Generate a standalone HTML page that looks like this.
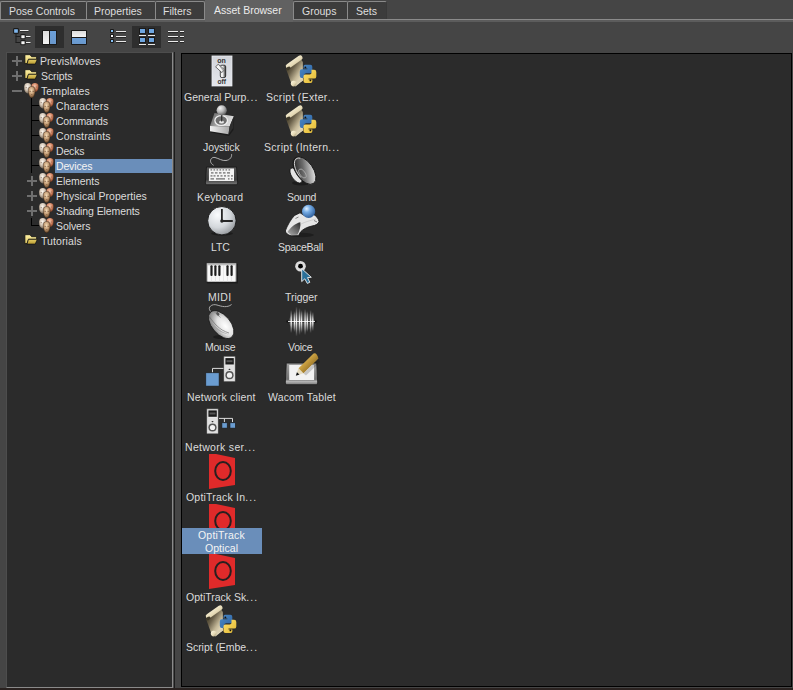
<!DOCTYPE html>
<html><head><meta charset="utf-8">
<style>
*{margin:0;padding:0;box-sizing:border-box}
html,body{width:793px;height:690px;overflow:hidden;background:#454545}
body{position:relative;font-family:"Liberation Sans",sans-serif;font-size:10.5px;color:#dcdcdc}
.a{position:absolute}
.t{position:absolute;white-space:nowrap;line-height:15px;height:15px}
/* tabs */
.tab{position:absolute;top:1px;height:19px;background:#3c3c3c;border-top:1px solid #8a8a8a;border-left:1px solid #8a8a8a;border-right:1px solid #393939;border-top-left-radius:2px;border-top-right-radius:2px}
.tab span{position:absolute;top:2px;line-height:15px;white-space:nowrap;color:#dedede}
.tabline{position:absolute;left:0;width:793px;top:19px;height:1px;background:#8a8a8a}
.tabline2{position:absolute;left:0;width:793px;top:20px;height:2px;background:#5c5c5c}
.active{position:absolute;left:205px;top:0;width:88px;height:22px;background:#616161}
.active span{position:absolute;left:9px;top:3px;line-height:15px;color:#ececec;white-space:nowrap}
.btnsel{position:absolute;top:26px;height:22px;width:29px;background:#2e2e2e}
/* panels */
#tree{position:absolute;left:6px;top:52px;width:167px;height:636px;background:#2b2b2b;border-left:1px solid #4d4d4d;border-top:1px solid #4d4d4d;border-right:1px solid #8a8a8a;border-bottom:1px solid #8a8a8a}
#treeR{position:absolute;left:173px;top:52px;width:2px;height:636px;background:linear-gradient(to right,#4a4a4a 50%,#1c1c1c 50%)}
#content{position:absolute;left:181px;top:53px;width:611px;height:634px;background:#2b2b2b;border:1px solid #000}
#bot{position:absolute;left:0;top:688px;width:793px;height:2px;background:#2a2220}
.sel{position:absolute;background:#6a8eba}
.dots{letter-spacing:1.1px}
.lbl2{position:absolute;line-height:15px;height:15px;white-space:nowrap;color:#dcdcdc}
.lbl{position:absolute;width:80px;text-align:center;line-height:15px;height:15px;white-space:nowrap;color:#dcdcdc}
</style></head><body>

<svg width="0" height="0" style="position:absolute">
<defs>
<radialGradient id="gPale" cx="45%" cy="35%" r="65%"><stop offset="0" stop-color="#fcf6ee"/><stop offset="0.55" stop-color="#d4c6b6"/><stop offset="1" stop-color="#7a6a58"/></radialGradient>
<radialGradient id="gPink" cx="45%" cy="35%" r="65%"><stop offset="0" stop-color="#f4ccb2"/><stop offset="0.55" stop-color="#d48664"/><stop offset="1" stop-color="#7e3c20"/></radialGradient>
<radialGradient id="gTan" cx="45%" cy="35%" r="65%"><stop offset="0" stop-color="#f4dcba"/><stop offset="0.55" stop-color="#c09870"/><stop offset="1" stop-color="#5e3e22"/></radialGradient>
<linearGradient id="gFoldB" x1="0" y1="0" x2="0" y2="1"><stop offset="0" stop-color="#fff2a8"/><stop offset="1" stop-color="#e0c860"/></linearGradient>
<linearGradient id="gFoldF" x1="0" y1="0" x2="0" y2="1"><stop offset="0" stop-color="#e6cf68"/><stop offset="1" stop-color="#b89a30"/></linearGradient>



</defs>
</svg>
<!-- Tabs -->
<div class="tab" style="left:0;width:87px"><span style="left:8px">Pose Controls</span></div>
<div class="tab" style="left:86px;width:70px"><span style="left:7px">Properties</span></div>
<div class="tab" style="left:155px;width:50px;border-right-color:#8a8a8a"><span style="left:7px">Filters</span></div>
<div class="tab" style="left:293px;width:55px"><span style="left:8px">Groups</span></div>
<div class="tab" style="left:347px;width:40px"><span style="left:8px">Sets</span></div>
<div class="tabline"></div>
<div class="tabline2"></div>
<div class="active"><span>Asset Browser</span></div>

<!-- Toolbar -->
<div class="btnsel" style="left:35px"></div>
<div class="btnsel" style="left:132px"></div>

<!-- Tree panel -->
<div id="tree"></div>
<div id="treeR"></div>

<!-- Content panel -->
<div id="content"></div>

<div id="bot"></div>
<svg class="a" style="left:0;top:22px" width="200" height="30" viewBox="0 22 200 30">
<defs>
<linearGradient id="gW" x1="0" y1="0" x2="0" y2="1"><stop offset="0" stop-color="#dcdcdc"/><stop offset="1" stop-color="#f4f4f4"/></linearGradient>
<linearGradient id="gB" x1="0" y1="0" x2="0" y2="1"><stop offset="0" stop-color="#6b9fd8"/><stop offset="1" stop-color="#6a98cc"/></linearGradient>
</defs>
<!-- tree icon -->
<rect x="13.6" y="28.6" width="4.8" height="4.8" rx="0.8" fill="#7fb6ec" stroke="#1c1a18" stroke-width="1.1"/>
<rect x="20" y="30" width="8.5" height="2" fill="#1c1c1c" opacity="0.5"/>
<rect x="20" y="30" width="8.5" height="1" fill="#ececec"/>
<rect x="15.5" y="33" width="1" height="9.5" fill="#1e1e1e"/>
<rect x="15.5" y="36" width="5" height="1" fill="#1e1e1e"/>
<rect x="15.5" y="42" width="5" height="1" fill="#1e1e1e"/>
<rect x="20.8" y="34.6" width="4.4" height="4.2" rx="0.8" fill="#f4f4f4" stroke="#1c1c1c" stroke-width="1.1"/>
<rect x="20.8" y="40.6" width="4.4" height="4.2" rx="0.8" fill="#f4f4f4" stroke="#1c1c1c" stroke-width="1.1"/>
<rect x="26" y="36" width="4.5" height="2" fill="#1c1c1c" opacity="0.5"/>
<rect x="26" y="36" width="4.5" height="1" fill="#ececec"/>
<rect x="26" y="42" width="4.5" height="2" fill="#1c1c1c" opacity="0.5"/>
<rect x="26" y="42" width="4.5" height="1" fill="#ececec"/>
<!-- vertical split (selected) -->
<rect x="42" y="30" width="15" height="15" rx="1" fill="#1a1a1a"/>
<rect x="43" y="31" width="6" height="13" fill="url(#gW)"/>
<rect x="50" y="31" width="6" height="13" fill="url(#gB)"/>
<!-- horizontal split -->
<rect x="71" y="30" width="16" height="15" rx="1" fill="#1a1a1a"/>
<rect x="72" y="31" width="14" height="6" fill="url(#gW)"/>
<rect x="72" y="38" width="14" height="6" fill="url(#gB)"/>
<!-- list icon -->
<rect x="110" y="29" width="4" height="4" rx="1" fill="#1a1a1a"/><rect x="111" y="30" width="2" height="2" fill="#86c0f4"/>
<rect x="110" y="34" width="4" height="4" rx="1" fill="#1a1a1a"/><rect x="111" y="35" width="2" height="2" fill="#f6f6f6"/>
<rect x="110" y="39" width="4" height="4" rx="1" fill="#1a1a1a"/><rect x="111" y="40" width="2" height="2" fill="#86c0f4"/>
<rect x="116" y="31" width="10" height="2" fill="#1a1a1a" opacity="0.7"/><rect x="116" y="31" width="10" height="1" fill="#e8e8e8"/>
<rect x="116" y="36" width="10" height="2" fill="#1a1a1a" opacity="0.7"/><rect x="116" y="36" width="10" height="1" fill="#e8e8e8"/>
<rect x="116" y="41" width="10" height="2" fill="#1a1a1a" opacity="0.7"/><rect x="116" y="41" width="10" height="1" fill="#e8e8e8"/>
<!-- grid icon (selected) -->
<rect x="139" y="28" width="7" height="6" fill="#1a1a1a"/><rect x="140" y="29" width="5" height="4" fill="#6fa6e0"/>
<rect x="148" y="28" width="7" height="6" fill="#1a1a1a"/><rect x="149" y="29" width="5" height="4" fill="#6fa6e0"/>
<rect x="139" y="37" width="7" height="6" fill="#1a1a1a"/><rect x="140" y="38" width="5" height="4" fill="#6fa6e0"/>
<rect x="148" y="37" width="7" height="6" fill="#1a1a1a"/><rect x="149" y="38" width="5" height="4" fill="#6fa6e0"/>
<rect x="139" y="35" width="7" height="1" fill="#e8e8e8"/><rect x="148" y="35" width="7" height="1" fill="#e8e8e8"/>
<rect x="139" y="44" width="7" height="1" fill="#e8e8e8"/><rect x="148" y="44" width="7" height="1" fill="#e8e8e8"/>
<!-- detail icon -->
<rect x="168" y="31" width="10" height="2" fill="#1a1a1a" opacity="0.7"/><rect x="168" y="31" width="10" height="1" fill="#ececec"/>
<rect x="180" y="31" width="4" height="2" fill="#1a1a1a" opacity="0.7"/><rect x="180" y="31" width="4" height="1" fill="#ececec"/>
<rect x="168" y="36" width="10" height="2" fill="#1a1a1a" opacity="0.7"/><rect x="168" y="36" width="10" height="1" fill="#ececec"/>
<rect x="180" y="36" width="4" height="2" fill="#1a1a1a" opacity="0.7"/><rect x="180" y="36" width="4" height="1" fill="#ececec"/>
<rect x="168" y="41" width="10" height="2" fill="#1a1a1a" opacity="0.7"/><rect x="168" y="41" width="10" height="1" fill="#ececec"/>
<rect x="180" y="41" width="4" height="2" fill="#1a1a1a" opacity="0.7"/><rect x="180" y="41" width="4" height="1" fill="#ececec"/>
</svg>
<div class="sel" style="left:55px;top:159px;width:117px;height:14px"></div>
<svg class="a" style="left:0;top:0" width="180" height="260" viewBox="0 0 180 260">
<rect x="31" y="98" width="1" height="75" fill="#000"/>
<g transform="translate(24,54)">
 <path d="M0.9,1.6 Q0.9,0.7 1.8,0.7 L6,0.7 L7.6,2.7 L12.6,2.7 L12.6,5.3 L4.6,5.3 L3,9.6 L0.9,9.6 Z" fill="url(#gFoldB)" stroke="#141414" stroke-width="0.8"/>
 <path d="M4.4,5.3 L13.4,5.3 L11.2,10.1 L3,10.1 Z" fill="url(#gFoldF)" stroke="#141414" stroke-width="0.8"/>
</g>
<g transform="translate(12,56)"><rect x="0" y="4" width="10" height="2" fill="#6f6f6f"/><rect x="4" y="0" width="2" height="10" fill="#6f6f6f"/></g>
<g transform="translate(24,69)">
 <path d="M0.9,1.6 Q0.9,0.7 1.8,0.7 L6,0.7 L7.6,2.7 L12.6,2.7 L12.6,5.3 L4.6,5.3 L3,9.6 L0.9,9.6 Z" fill="url(#gFoldB)" stroke="#141414" stroke-width="0.8"/>
 <path d="M4.4,5.3 L13.4,5.3 L11.2,10.1 L3,10.1 Z" fill="url(#gFoldF)" stroke="#141414" stroke-width="0.8"/>
</g>
<g transform="translate(12,71)"><rect x="0" y="4" width="10" height="2" fill="#6f6f6f"/><rect x="4" y="0" width="2" height="10" fill="#6f6f6f"/></g>
<g transform="translate(23,83)">
 <path d="M1.2,3.5 C1.2,1 2.8,0 4.8,0 C6.8,0 8.4,1 8.4,3.5 L8.2,6.5 C7.8,8.8 6.4,10.4 4.8,10.4 C3.2,10.4 1.6,8.8 1.3,6.5 Z" fill="url(#gPale)"/>
 <path d="M8.4,3 C8.4,0.8 10,0 12,0 C14,0 15.5,0.8 15.5,3 L15.3,5.5 C15,7.6 13.6,9 12,9 C10.4,9 9,7.6 8.6,5.5 Z" fill="url(#gPink)"/>
 <g fill="#5a4030" opacity="0.5"><rect x="2.6" y="4.2" width="1.4" height="0.9"/><rect x="5.6" y="4.2" width="1.4" height="0.9"/><rect x="10" y="3.6" width="1.3" height="0.9"/><rect x="12.8" y="3.6" width="1.3" height="0.9"/></g>
 <path d="M5.2,7 C5.2,4.6 6.8,3.5 8.7,3.5 C10.6,3.5 12.2,4.6 12.2,7 L12,10 C11.6,12.8 10.3,14.9 8.7,14.9 C7.1,14.9 5.8,12.8 5.4,10 Z" fill="url(#gTan)" stroke="#2a2018" stroke-width="0.4"/>
 <g fill="#4a3020" opacity="0.55"><rect x="6.5" y="7.9" width="1.5" height="0.9"/><rect x="9.5" y="7.9" width="1.5" height="0.9"/><rect x="8" y="11.3" width="1.4" height="0.7"/></g>
</g>
<rect x="12" y="90" width="10" height="2" fill="#6f6f6f"/>
<g transform="translate(38,98)">
 <path d="M1.2,3.5 C1.2,1 2.8,0 4.8,0 C6.8,0 8.4,1 8.4,3.5 L8.2,6.5 C7.8,8.8 6.4,10.4 4.8,10.4 C3.2,10.4 1.6,8.8 1.3,6.5 Z" fill="url(#gPale)"/>
 <path d="M8.4,3 C8.4,0.8 10,0 12,0 C14,0 15.5,0.8 15.5,3 L15.3,5.5 C15,7.6 13.6,9 12,9 C10.4,9 9,7.6 8.6,5.5 Z" fill="url(#gPink)"/>
 <g fill="#5a4030" opacity="0.5"><rect x="2.6" y="4.2" width="1.4" height="0.9"/><rect x="5.6" y="4.2" width="1.4" height="0.9"/><rect x="10" y="3.6" width="1.3" height="0.9"/><rect x="12.8" y="3.6" width="1.3" height="0.9"/></g>
 <path d="M5.2,7 C5.2,4.6 6.8,3.5 8.7,3.5 C10.6,3.5 12.2,4.6 12.2,7 L12,10 C11.6,12.8 10.3,14.9 8.7,14.9 C7.1,14.9 5.8,12.8 5.4,10 Z" fill="url(#gTan)" stroke="#2a2018" stroke-width="0.4"/>
 <g fill="#4a3020" opacity="0.55"><rect x="6.5" y="7.9" width="1.5" height="0.9"/><rect x="9.5" y="7.9" width="1.5" height="0.9"/><rect x="8" y="11.3" width="1.4" height="0.7"/></g>
</g>
<rect x="31" y="105" width="8" height="1" fill="#000"/>
<g transform="translate(38,113)">
 <path d="M1.2,3.5 C1.2,1 2.8,0 4.8,0 C6.8,0 8.4,1 8.4,3.5 L8.2,6.5 C7.8,8.8 6.4,10.4 4.8,10.4 C3.2,10.4 1.6,8.8 1.3,6.5 Z" fill="url(#gPale)"/>
 <path d="M8.4,3 C8.4,0.8 10,0 12,0 C14,0 15.5,0.8 15.5,3 L15.3,5.5 C15,7.6 13.6,9 12,9 C10.4,9 9,7.6 8.6,5.5 Z" fill="url(#gPink)"/>
 <g fill="#5a4030" opacity="0.5"><rect x="2.6" y="4.2" width="1.4" height="0.9"/><rect x="5.6" y="4.2" width="1.4" height="0.9"/><rect x="10" y="3.6" width="1.3" height="0.9"/><rect x="12.8" y="3.6" width="1.3" height="0.9"/></g>
 <path d="M5.2,7 C5.2,4.6 6.8,3.5 8.7,3.5 C10.6,3.5 12.2,4.6 12.2,7 L12,10 C11.6,12.8 10.3,14.9 8.7,14.9 C7.1,14.9 5.8,12.8 5.4,10 Z" fill="url(#gTan)" stroke="#2a2018" stroke-width="0.4"/>
 <g fill="#4a3020" opacity="0.55"><rect x="6.5" y="7.9" width="1.5" height="0.9"/><rect x="9.5" y="7.9" width="1.5" height="0.9"/><rect x="8" y="11.3" width="1.4" height="0.7"/></g>
</g>
<rect x="31" y="120" width="8" height="1" fill="#000"/>
<g transform="translate(38,128)">
 <path d="M1.2,3.5 C1.2,1 2.8,0 4.8,0 C6.8,0 8.4,1 8.4,3.5 L8.2,6.5 C7.8,8.8 6.4,10.4 4.8,10.4 C3.2,10.4 1.6,8.8 1.3,6.5 Z" fill="url(#gPale)"/>
 <path d="M8.4,3 C8.4,0.8 10,0 12,0 C14,0 15.5,0.8 15.5,3 L15.3,5.5 C15,7.6 13.6,9 12,9 C10.4,9 9,7.6 8.6,5.5 Z" fill="url(#gPink)"/>
 <g fill="#5a4030" opacity="0.5"><rect x="2.6" y="4.2" width="1.4" height="0.9"/><rect x="5.6" y="4.2" width="1.4" height="0.9"/><rect x="10" y="3.6" width="1.3" height="0.9"/><rect x="12.8" y="3.6" width="1.3" height="0.9"/></g>
 <path d="M5.2,7 C5.2,4.6 6.8,3.5 8.7,3.5 C10.6,3.5 12.2,4.6 12.2,7 L12,10 C11.6,12.8 10.3,14.9 8.7,14.9 C7.1,14.9 5.8,12.8 5.4,10 Z" fill="url(#gTan)" stroke="#2a2018" stroke-width="0.4"/>
 <g fill="#4a3020" opacity="0.55"><rect x="6.5" y="7.9" width="1.5" height="0.9"/><rect x="9.5" y="7.9" width="1.5" height="0.9"/><rect x="8" y="11.3" width="1.4" height="0.7"/></g>
</g>
<rect x="31" y="135" width="8" height="1" fill="#000"/>
<g transform="translate(38,143)">
 <path d="M1.2,3.5 C1.2,1 2.8,0 4.8,0 C6.8,0 8.4,1 8.4,3.5 L8.2,6.5 C7.8,8.8 6.4,10.4 4.8,10.4 C3.2,10.4 1.6,8.8 1.3,6.5 Z" fill="url(#gPale)"/>
 <path d="M8.4,3 C8.4,0.8 10,0 12,0 C14,0 15.5,0.8 15.5,3 L15.3,5.5 C15,7.6 13.6,9 12,9 C10.4,9 9,7.6 8.6,5.5 Z" fill="url(#gPink)"/>
 <g fill="#5a4030" opacity="0.5"><rect x="2.6" y="4.2" width="1.4" height="0.9"/><rect x="5.6" y="4.2" width="1.4" height="0.9"/><rect x="10" y="3.6" width="1.3" height="0.9"/><rect x="12.8" y="3.6" width="1.3" height="0.9"/></g>
 <path d="M5.2,7 C5.2,4.6 6.8,3.5 8.7,3.5 C10.6,3.5 12.2,4.6 12.2,7 L12,10 C11.6,12.8 10.3,14.9 8.7,14.9 C7.1,14.9 5.8,12.8 5.4,10 Z" fill="url(#gTan)" stroke="#2a2018" stroke-width="0.4"/>
 <g fill="#4a3020" opacity="0.55"><rect x="6.5" y="7.9" width="1.5" height="0.9"/><rect x="9.5" y="7.9" width="1.5" height="0.9"/><rect x="8" y="11.3" width="1.4" height="0.7"/></g>
</g>
<rect x="31" y="150" width="8" height="1" fill="#000"/>
<g transform="translate(38,158)">
 <path d="M1.2,3.5 C1.2,1 2.8,0 4.8,0 C6.8,0 8.4,1 8.4,3.5 L8.2,6.5 C7.8,8.8 6.4,10.4 4.8,10.4 C3.2,10.4 1.6,8.8 1.3,6.5 Z" fill="url(#gPale)"/>
 <path d="M8.4,3 C8.4,0.8 10,0 12,0 C14,0 15.5,0.8 15.5,3 L15.3,5.5 C15,7.6 13.6,9 12,9 C10.4,9 9,7.6 8.6,5.5 Z" fill="url(#gPink)"/>
 <g fill="#5a4030" opacity="0.5"><rect x="2.6" y="4.2" width="1.4" height="0.9"/><rect x="5.6" y="4.2" width="1.4" height="0.9"/><rect x="10" y="3.6" width="1.3" height="0.9"/><rect x="12.8" y="3.6" width="1.3" height="0.9"/></g>
 <path d="M5.2,7 C5.2,4.6 6.8,3.5 8.7,3.5 C10.6,3.5 12.2,4.6 12.2,7 L12,10 C11.6,12.8 10.3,14.9 8.7,14.9 C7.1,14.9 5.8,12.8 5.4,10 Z" fill="url(#gTan)" stroke="#2a2018" stroke-width="0.4"/>
 <g fill="#4a3020" opacity="0.55"><rect x="6.5" y="7.9" width="1.5" height="0.9"/><rect x="9.5" y="7.9" width="1.5" height="0.9"/><rect x="8" y="11.3" width="1.4" height="0.7"/></g>
</g>
<rect x="31" y="165" width="8" height="1" fill="#000"/>
<g transform="translate(38,173)">
 <path d="M1.2,3.5 C1.2,1 2.8,0 4.8,0 C6.8,0 8.4,1 8.4,3.5 L8.2,6.5 C7.8,8.8 6.4,10.4 4.8,10.4 C3.2,10.4 1.6,8.8 1.3,6.5 Z" fill="url(#gPale)"/>
 <path d="M8.4,3 C8.4,0.8 10,0 12,0 C14,0 15.5,0.8 15.5,3 L15.3,5.5 C15,7.6 13.6,9 12,9 C10.4,9 9,7.6 8.6,5.5 Z" fill="url(#gPink)"/>
 <g fill="#5a4030" opacity="0.5"><rect x="2.6" y="4.2" width="1.4" height="0.9"/><rect x="5.6" y="4.2" width="1.4" height="0.9"/><rect x="10" y="3.6" width="1.3" height="0.9"/><rect x="12.8" y="3.6" width="1.3" height="0.9"/></g>
 <path d="M5.2,7 C5.2,4.6 6.8,3.5 8.7,3.5 C10.6,3.5 12.2,4.6 12.2,7 L12,10 C11.6,12.8 10.3,14.9 8.7,14.9 C7.1,14.9 5.8,12.8 5.4,10 Z" fill="url(#gTan)" stroke="#2a2018" stroke-width="0.4"/>
 <g fill="#4a3020" opacity="0.55"><rect x="6.5" y="7.9" width="1.5" height="0.9"/><rect x="9.5" y="7.9" width="1.5" height="0.9"/><rect x="8" y="11.3" width="1.4" height="0.7"/></g>
</g>
<g transform="translate(27,176)"><rect x="0" y="4" width="10" height="2" fill="#6f6f6f"/><rect x="4" y="0" width="2" height="10" fill="#6f6f6f"/></g>
<g transform="translate(38,188)">
 <path d="M1.2,3.5 C1.2,1 2.8,0 4.8,0 C6.8,0 8.4,1 8.4,3.5 L8.2,6.5 C7.8,8.8 6.4,10.4 4.8,10.4 C3.2,10.4 1.6,8.8 1.3,6.5 Z" fill="url(#gPale)"/>
 <path d="M8.4,3 C8.4,0.8 10,0 12,0 C14,0 15.5,0.8 15.5,3 L15.3,5.5 C15,7.6 13.6,9 12,9 C10.4,9 9,7.6 8.6,5.5 Z" fill="url(#gPink)"/>
 <g fill="#5a4030" opacity="0.5"><rect x="2.6" y="4.2" width="1.4" height="0.9"/><rect x="5.6" y="4.2" width="1.4" height="0.9"/><rect x="10" y="3.6" width="1.3" height="0.9"/><rect x="12.8" y="3.6" width="1.3" height="0.9"/></g>
 <path d="M5.2,7 C5.2,4.6 6.8,3.5 8.7,3.5 C10.6,3.5 12.2,4.6 12.2,7 L12,10 C11.6,12.8 10.3,14.9 8.7,14.9 C7.1,14.9 5.8,12.8 5.4,10 Z" fill="url(#gTan)" stroke="#2a2018" stroke-width="0.4"/>
 <g fill="#4a3020" opacity="0.55"><rect x="6.5" y="7.9" width="1.5" height="0.9"/><rect x="9.5" y="7.9" width="1.5" height="0.9"/><rect x="8" y="11.3" width="1.4" height="0.7"/></g>
</g>
<g transform="translate(27,191)"><rect x="0" y="4" width="10" height="2" fill="#6f6f6f"/><rect x="4" y="0" width="2" height="10" fill="#6f6f6f"/></g>
<g transform="translate(38,203)">
 <path d="M1.2,3.5 C1.2,1 2.8,0 4.8,0 C6.8,0 8.4,1 8.4,3.5 L8.2,6.5 C7.8,8.8 6.4,10.4 4.8,10.4 C3.2,10.4 1.6,8.8 1.3,6.5 Z" fill="url(#gPale)"/>
 <path d="M8.4,3 C8.4,0.8 10,0 12,0 C14,0 15.5,0.8 15.5,3 L15.3,5.5 C15,7.6 13.6,9 12,9 C10.4,9 9,7.6 8.6,5.5 Z" fill="url(#gPink)"/>
 <g fill="#5a4030" opacity="0.5"><rect x="2.6" y="4.2" width="1.4" height="0.9"/><rect x="5.6" y="4.2" width="1.4" height="0.9"/><rect x="10" y="3.6" width="1.3" height="0.9"/><rect x="12.8" y="3.6" width="1.3" height="0.9"/></g>
 <path d="M5.2,7 C5.2,4.6 6.8,3.5 8.7,3.5 C10.6,3.5 12.2,4.6 12.2,7 L12,10 C11.6,12.8 10.3,14.9 8.7,14.9 C7.1,14.9 5.8,12.8 5.4,10 Z" fill="url(#gTan)" stroke="#2a2018" stroke-width="0.4"/>
 <g fill="#4a3020" opacity="0.55"><rect x="6.5" y="7.9" width="1.5" height="0.9"/><rect x="9.5" y="7.9" width="1.5" height="0.9"/><rect x="8" y="11.3" width="1.4" height="0.7"/></g>
</g>
<g transform="translate(27,206)"><rect x="0" y="4" width="10" height="2" fill="#6f6f6f"/><rect x="4" y="0" width="2" height="10" fill="#6f6f6f"/></g>
<g transform="translate(38,218)">
 <path d="M1.2,3.5 C1.2,1 2.8,0 4.8,0 C6.8,0 8.4,1 8.4,3.5 L8.2,6.5 C7.8,8.8 6.4,10.4 4.8,10.4 C3.2,10.4 1.6,8.8 1.3,6.5 Z" fill="url(#gPale)"/>
 <path d="M8.4,3 C8.4,0.8 10,0 12,0 C14,0 15.5,0.8 15.5,3 L15.3,5.5 C15,7.6 13.6,9 12,9 C10.4,9 9,7.6 8.6,5.5 Z" fill="url(#gPink)"/>
 <g fill="#5a4030" opacity="0.5"><rect x="2.6" y="4.2" width="1.4" height="0.9"/><rect x="5.6" y="4.2" width="1.4" height="0.9"/><rect x="10" y="3.6" width="1.3" height="0.9"/><rect x="12.8" y="3.6" width="1.3" height="0.9"/></g>
 <path d="M5.2,7 C5.2,4.6 6.8,3.5 8.7,3.5 C10.6,3.5 12.2,4.6 12.2,7 L12,10 C11.6,12.8 10.3,14.9 8.7,14.9 C7.1,14.9 5.8,12.8 5.4,10 Z" fill="url(#gTan)" stroke="#2a2018" stroke-width="0.4"/>
 <g fill="#4a3020" opacity="0.55"><rect x="6.5" y="7.9" width="1.5" height="0.9"/><rect x="9.5" y="7.9" width="1.5" height="0.9"/><rect x="8" y="11.3" width="1.4" height="0.7"/></g>
</g>
<rect x="31" y="218" width="1" height="8" fill="#000"/>
<rect x="31" y="225" width="8" height="1" fill="#000"/>
<g transform="translate(24,234)">
 <path d="M0.9,1.6 Q0.9,0.7 1.8,0.7 L6,0.7 L7.6,2.7 L12.6,2.7 L12.6,5.3 L4.6,5.3 L3,9.6 L0.9,9.6 Z" fill="url(#gFoldB)" stroke="#141414" stroke-width="0.8"/>
 <path d="M4.4,5.3 L13.4,5.3 L11.2,10.1 L3,10.1 Z" fill="url(#gFoldF)" stroke="#141414" stroke-width="0.8"/>
</g>
</svg>
<div class="t" style="left:40px;top:54px;letter-spacing:0.05px">PrevisMoves</div>
<div class="t" style="left:41px;top:69px;letter-spacing:-0.1px">Scripts</div>
<div class="t" style="left:41px;top:84px;letter-spacing:0.1px">Templates</div>
<div class="t" style="left:56px;top:99px;letter-spacing:0.15px">Characters</div>
<div class="t" style="left:56px;top:114px;letter-spacing:-0.25px">Commands</div>
<div class="t" style="left:56px;top:129px;letter-spacing:0.15px">Constraints</div>
<div class="t" style="left:56px;top:144px;letter-spacing:-0.15px">Decks</div>
<div class="t" style="left:56px;top:159px;letter-spacing:-0.15px;color:#f4f4f4">Devices</div>
<div class="t" style="left:56px;top:174px;letter-spacing:-0.05px">Elements</div>
<div class="t" style="left:56px;top:189px;letter-spacing:0.05px">Physical Properties</div>
<div class="t" style="left:56px;top:204px;letter-spacing:-0.1px">Shading Elements</div>
<div class="t" style="left:56px;top:219px;letter-spacing:-0.1px">Solvers</div>
<div class="t" style="left:41px;top:234px;letter-spacing:0.1px">Tutorials</div><svg class="a" style="left:0;top:0" width="793" height="690" viewBox="0 0 793 690">
<defs>
<linearGradient id="gPlate" x1="0" y1="0" x2="0" y2="1"><stop offset="0" stop-color="#d2d4da"/><stop offset="1" stop-color="#e4e6ec"/></linearGradient>
<radialGradient id="gBall" cx="35%" cy="30%" r="75%"><stop offset="0" stop-color="#f4f4f4"/><stop offset="0.5" stop-color="#b8b8b8"/><stop offset="1" stop-color="#5a5a5a"/></radialGradient>
<radialGradient id="gBlueBall" cx="35%" cy="30%" r="75%"><stop offset="0" stop-color="#e0f0ff"/><stop offset="0.35" stop-color="#78aee6"/><stop offset="1" stop-color="#2a5a98"/></radialGradient>
<radialGradient id="gClock" cx="35%" cy="30%" r="80%"><stop offset="0" stop-color="#fafcfe"/><stop offset="0.55" stop-color="#d4d8dc"/><stop offset="1" stop-color="#8a8e92"/></radialGradient>
<linearGradient id="gSpk" x1="0.1" y1="0.1" x2="0.9" y2="0.9"><stop offset="0" stop-color="#1c1c1c"/><stop offset="0.45" stop-color="#6a6a6a"/><stop offset="1" stop-color="#f4f4f4"/></linearGradient>
<linearGradient id="gKbd" x1="0" y1="0" x2="0" y2="1"><stop offset="0" stop-color="#5a5a5a"/><stop offset="0.7" stop-color="#3c3c3c"/><stop offset="1" stop-color="#7a7a7a"/></linearGradient>
<linearGradient id="gFrame" x1="0" y1="0" x2="0" y2="1"><stop offset="0" stop-color="#a0a0a0"/><stop offset="0.75" stop-color="#707070"/><stop offset="0.85" stop-color="#b4b4b4"/><stop offset="1" stop-color="#7a7a7a"/></linearGradient>
<linearGradient id="gJoyTop" x1="0" y1="0" x2="1" y2="0.3"><stop offset="0" stop-color="#505050"/><stop offset="0.6" stop-color="#bcbcbc"/><stop offset="1" stop-color="#dedede"/></linearGradient>
<linearGradient id="gJoyFront" x1="0" y1="0" x2="1" y2="0"><stop offset="0" stop-color="#f0f0f0"/><stop offset="1" stop-color="#a8a8a8"/></linearGradient>
<linearGradient id="gSBHole" x1="0" y1="1" x2="1" y2="0"><stop offset="0" stop-color="#b0b0b0"/><stop offset="1" stop-color="#2a2a2a"/></linearGradient>
<linearGradient id="gLever" x1="0" y1="0" x2="1" y2="0"><stop offset="0" stop-color="#f8f8f8"/><stop offset="0.45" stop-color="#f0f0f0"/><stop offset="1" stop-color="#2a2a2a"/></linearGradient>
<linearGradient id="gPaper" x1="0.05" y1="0.2" x2="0.75" y2="0.95"><stop offset="0" stop-color="#38321f"/><stop offset="0.35" stop-color="#6a604a"/><stop offset="0.7" stop-color="#c4b898"/><stop offset="1" stop-color="#eee4c6"/></linearGradient>
<linearGradient id="gRoll" x1="0" y1="0" x2="1" y2="1"><stop offset="0" stop-color="#fffae4"/><stop offset="0.6" stop-color="#e4d8b4"/><stop offset="1" stop-color="#9a8e6a"/></linearGradient>
<linearGradient id="gPyB" x1="0" y1="0" x2="1" y2="1"><stop offset="0" stop-color="#4a8ac8"/><stop offset="1" stop-color="#2e62a0"/></linearGradient>
<linearGradient id="gPyY" x1="0" y1="0" x2="1" y2="1"><stop offset="0" stop-color="#ffe070"/><stop offset="1" stop-color="#e0b830"/></linearGradient>
<linearGradient id="gPencil" x1="0" y1="0" x2="1" y2="1"><stop offset="0" stop-color="#f4dc90"/><stop offset="0.45" stop-color="#c49a3c"/><stop offset="1" stop-color="#5a4010"/></linearGradient>
<radialGradient id="gMouse" cx="62%" cy="62%" r="60%"><stop offset="0" stop-color="#ffffff"/><stop offset="0.55" stop-color="#e2e2e2"/><stop offset="1" stop-color="#8c8c8c"/></radialGradient>
<linearGradient id="gWave" x1="0" y1="0" x2="0" y2="1"><stop offset="0" stop-color="#fff" stop-opacity="0"/><stop offset="0.5" stop-color="#fff" stop-opacity="1"/><stop offset="1" stop-color="#fff" stop-opacity="0"/></linearGradient>



</defs>

<!-- r0 General purpose switch -->
<rect x="213" y="57" width="20" height="30" fill="#1a1a1a" opacity="0.5"/>
<rect x="212" y="56" width="20" height="30" fill="url(#gPlate)" stroke="#eceef2" stroke-width="0.8"/>
<text x="221.6" y="62.9" font-family="Liberation Sans" font-weight="bold" font-size="7" fill="#333" text-anchor="middle">on</text>
<text x="221.8" y="83.6" font-family="Liberation Sans" font-weight="bold" font-size="6.6" fill="#333" text-anchor="middle">off</text>
<rect x="220.3" y="65.2" width="5.4" height="12.4" rx="1.6" fill="url(#gLever)" stroke="#1e1e1e" stroke-width="0.8"/>
<path d="M215.6,66.8 L218.2,64.3 L224.4,69.6 L221.9,72.6 Z" fill="#f6f6f6" stroke="#333" stroke-width="0.7"/>
<path d="M218.6,65 L224.4,69.6 L223,71.2 Z" fill="#9a9a9a" opacity="0.8"/>

<!-- r0 script -->
<g transform="translate(0,0)">
 <path d="M286,69 L300.5,58.5 L302.8,62 L302.8,80.5 L295.5,86.5 L291,82.5 Z" fill="url(#gPaper)"/>
 <line x1="294" y1="83.6" x2="302" y2="79.8" stroke="#d8ceb0" stroke-width="2.4" stroke-linecap="round"/>
 <line x1="288.2" y1="66.2" x2="300.2" y2="57.8" stroke="url(#gRoll)" stroke-width="4.8" stroke-linecap="round"/>
 <ellipse cx="288.4" cy="68.4" rx="2.3" ry="1.6" transform="rotate(-33 288.4 68.4)" fill="#3e3828"/>
 <circle cx="293.6" cy="83.6" r="2.8" fill="url(#gRoll)"/>
 <path d="M305,64.8 h5.3 q2,0 2,2 v4.8 q0,1.6 -1.6,1.6 h-4.6 q-1.8,0 -1.8,1.8 v3 h-2.5 q-2,0 -2,-2.2 v-4.4 q0,-2.2 2,-2.2 h5.6 v-0.8 h-3.9 v-1.6 q0,-2 1.5,-2 z" fill="url(#gPyB)"/>
 <path d="M310.5,83 h-5 q-2,0 -2,-2 v-4.8 q0,-1.6 1.6,-1.6 h4.6 q1.8,0 1.8,-1.8 v-3 h2.6 q2.2,0 2.2,2.2 v4.4 q0,2.2 -2.2,2.2 h-5.6 v0.8 h3.9 v1.6 q0,2 -1.9,2 z" fill="url(#gPyY)"/>
 <circle cx="305.4" cy="67.4" r="0.9" fill="#111"/>
 <circle cx="310.4" cy="80.4" r="0.9" fill="#111"/>
</g>

<!-- r1 joystick -->
<path d="M214.5,113 L233.8,116.3 L233,128.5 L228.5,134.5 L210,131 L210,126 Z" fill="#000" opacity="0.35" transform="translate(0.5,1.5)"/>
<path d="M214.5,113 L233.8,116.3 L229.6,126.5 L210,126 Z" fill="url(#gJoyTop)"/>
<path d="M210,126 L229.6,126.5 L228.5,134.3 L210,131.2 Z" fill="url(#gJoyFront)"/>
<path d="M229.6,126.5 L233.8,116.3 L233.2,128.1 L228.5,134.3 Z" fill="#2e2e2e"/>
<ellipse cx="221.2" cy="120.5" rx="6.3" ry="4.8" fill="#6e6e6e" stroke="#f0f0f0" stroke-width="1.3"/>
<ellipse cx="221.5" cy="122" rx="2.5" ry="1.5" fill="#e8e8e8"/>
<rect x="221.1" y="113" width="1.2" height="8.5" fill="#2a2a2a"/>
<circle cx="221.7" cy="110.3" r="5.1" fill="url(#gBall)"/>

<!-- r1 script -->
<g transform="translate(0,50)">
 <path d="M286,69 L300.5,58.5 L302.8,62 L302.8,80.5 L295.5,86.5 L291,82.5 Z" fill="url(#gPaper)"/>
 <line x1="294" y1="83.6" x2="302" y2="79.8" stroke="#d8ceb0" stroke-width="2.4" stroke-linecap="round"/>
 <line x1="288.2" y1="66.2" x2="300.2" y2="57.8" stroke="url(#gRoll)" stroke-width="4.8" stroke-linecap="round"/>
 <ellipse cx="288.4" cy="68.4" rx="2.3" ry="1.6" transform="rotate(-33 288.4 68.4)" fill="#3e3828"/>
 <circle cx="293.6" cy="83.6" r="2.8" fill="url(#gRoll)"/>
 <path d="M305,64.8 h5.3 q2,0 2,2 v4.8 q0,1.6 -1.6,1.6 h-4.6 q-1.8,0 -1.8,1.8 v3 h-2.5 q-2,0 -2,-2.2 v-4.4 q0,-2.2 2,-2.2 h5.6 v-0.8 h-3.9 v-1.6 q0,-2 1.5,-2 z" fill="url(#gPyB)"/>
 <path d="M310.5,83 h-5 q-2,0 -2,-2 v-4.8 q0,-1.6 1.6,-1.6 h4.6 q1.8,0 1.8,-1.8 v-3 h2.6 q2.2,0 2.2,2.2 v4.4 q0,2.2 -2.2,2.2 h-5.6 v0.8 h3.9 v1.6 q0,2 -1.9,2 z" fill="url(#gPyY)"/>
 <circle cx="305.4" cy="67.4" r="0.9" fill="#111"/>
 <circle cx="310.4" cy="80.4" r="0.9" fill="#111"/>
</g>

<!-- r2 keyboard -->
<path d="M213.6,165.3 C208,162 211,156.5 215,157.5 C219,158.5 222,161 226,160.5 C230,160 232,157 231.6,154.2" fill="none" stroke="#b0b0b0" stroke-width="1"/>
<path d="M206.5,167 L236.5,167 L237.7,183 L236.7,184.7 L206.3,184.7 L205.3,183 Z" fill="url(#gKbd)" stroke="#161616" stroke-width="0.8"/>
<path d="M209,168.4 L234,168.4 L234,181 L208.9,181 Z" fill="#f2f2f2"/>
<g fill="#3a3a3a" opacity="0.75">
 <rect x="210.5" y="169.3" width="1.6" height="1.2"/><rect x="213.5" y="169.3" width="1.6" height="1.2"/><rect x="216.5" y="169.3" width="1.6" height="1.2"/><rect x="219.5" y="169.3" width="1.6" height="1.2"/><rect x="222.5" y="169.3" width="1.6" height="1.2"/><rect x="225.5" y="169.3" width="1.6" height="1.2"/><rect x="228.5" y="169.3" width="1.6" height="1.2"/>
 <rect x="211" y="172.3" width="2.5" height="1.2"/><rect x="215" y="172.3" width="2.5" height="1.2"/><rect x="219" y="172.3" width="2.5" height="1.2"/><rect x="223" y="172.3" width="2.5" height="1.2"/><rect x="227" y="172.3" width="3" height="1.2"/>
 <rect x="210.5" y="175.3" width="2" height="1.2"/><rect x="213.5" y="175.3" width="2" height="1.2"/><rect x="217" y="175.3" width="2" height="1.2"/><rect x="220.5" y="175.3" width="2" height="1.2"/><rect x="224" y="175.3" width="2" height="1.2"/><rect x="227.5" y="175.3" width="2" height="1.2"/><rect x="231" y="175.3" width="2" height="1.2"/>
 <rect x="210.5" y="178.3" width="3.5" height="1.2"/><rect x="216" y="178.3" width="9" height="1.2"/><rect x="228" y="178.3" width="1.5" height="1.2"/><rect x="231" y="178.3" width="1.5" height="1.2"/>
</g>

<!-- r2 sound -->
<ellipse cx="301" cy="183" rx="9" ry="2.5" fill="#000" opacity="0.35"/>
<ellipse cx="296" cy="175.5" rx="4.2" ry="8.8" transform="rotate(-35 296 175.5)" fill="#e4e4e4" stroke="#151515" stroke-width="0.8"/>
<ellipse cx="304.5" cy="170.5" rx="8.6" ry="15.8" transform="rotate(-35 304.5 170.5)" fill="url(#gSpk)" stroke="#151515" stroke-width="0.9"/>
<polyline points="300.93,177.52 299.15,175.39 297.58,173.07 296.28,170.65 295.29,168.22 294.66,165.88 294.40,163.72 294.54,161.82 295.05,160.25 295.93,159.08 297.14,158.35 298.63,158.08 300.35,158.29" fill="none" stroke="#d0d0d0" stroke-width="1"/>
<ellipse cx="302.5" cy="173.5" rx="2.6" ry="5.2" transform="rotate(-35 302.5 173.5)" fill="none" stroke="#a8a8a8" stroke-width="0.9"/>
<!-- r3 LTC clock -->
<ellipse cx="222" cy="233.5" rx="11" ry="2" fill="#000" opacity="0.35"/>
<circle cx="221.9" cy="220.7" r="14.2" fill="url(#gClock)" stroke="#151515" stroke-width="0.9"/>
<path d="M221.9,209 L221.9,221 L232.8,221" fill="none" stroke="#262626" stroke-width="1.8"/>
<circle cx="221.9" cy="221" r="1.7" fill="#262626"/>

<!-- r3 SpaceBall -->
<ellipse cx="302" cy="235" rx="12" ry="2.2" fill="#000" opacity="0.3"/>
<path d="M285.3,231 C287,226 291,219 294.5,215.5 L300,212.8 L306,216.5 L313,214.2 C316,215.5 318.5,218.5 319,221.5 C318.5,223.5 316,225.5 312,226 C307,227 302.5,229.5 300.5,232 L298.5,235.6 L291,235.8 C288,235 286,233.5 285.3,231 Z" fill="#e6e6e6" stroke="#141414" stroke-width="0.8"/>
<path d="M287.5,232 C290,228 295,223.5 300.3,222.3 C301,226 299.5,231 297.5,234.8 L291,235 Z" fill="url(#gSBHole)"/>
<path d="M295.5,218.5 L298.5,217 M314,220.5 L317,222" stroke="#7a7a7a" stroke-width="0.9"/>
<path d="M301,224 C305,222 310,220.5 316,219" fill="none" stroke="#c0c0c0" stroke-width="0.6"/>
<circle cx="308.6" cy="211.4" r="6.6" fill="url(#gBlueBall)"/>

<!-- r4 MIDI -->
<rect x="207" y="264" width="31" height="19.5" fill="#000" opacity="0.3"/>
<rect x="206.2" y="262.8" width="30.6" height="19.2" fill="#bdbdbd" stroke="#1a1a1a" stroke-width="0.7"/>
<rect x="207.8" y="265.3" width="27.4" height="16.2" fill="#f8f8f8"/>
<g fill="#d8d8d8"><rect x="211.5" y="275" width="0.5" height="6.5"/><rect x="215.4" y="275" width="0.5" height="6.5"/><rect x="219.4" y="275" width="0.5" height="6.5"/><rect x="223.4" y="265" width="0.5" height="16.5"/><rect x="227.5" y="275" width="0.5" height="6.5"/><rect x="231.5" y="275" width="0.5" height="6.5"/></g>
<g fill="#1c1c1c"><rect x="210.4" y="265.3" width="2.2" height="10.6" rx="1"/><rect x="214.3" y="265.3" width="2.2" height="10.6" rx="1"/><rect x="218.3" y="265.3" width="2.2" height="10.6" rx="1"/><rect x="226.4" y="265.3" width="2.2" height="10.6" rx="1"/><rect x="230.5" y="265.3" width="2.2" height="10.6" rx="1"/></g>

<!-- r4 Trigger -->
<circle cx="300.5" cy="266.2" r="5.3" fill="#dcdcdc"/>
<circle cx="300.5" cy="266.2" r="2.4" fill="#000"/>
<path d="M301.7,268.6 L301.7,281.6 L304.8,278.8 L307.3,283.4 L309.8,282.3 L307.5,277.6 L311.3,277.3 Z" fill="#2a6f98" stroke="#f0f0f0" stroke-width="0.9"/>

<!-- r5 Mouse -->
<path d="M210.5,311.4 C207,307 212,303.5 217,305 C222,306.5 227,308 231.6,304.5" fill="none" stroke="#a8a8a8" stroke-width="1"/>
<ellipse cx="222" cy="337" rx="9" ry="2" fill="#000" opacity="0.35"/>
<ellipse cx="221.2" cy="324.6" rx="9.3" ry="16.4" transform="rotate(-40 221.2 324.6)" fill="url(#gMouse)" stroke="#181818" stroke-width="0.8"/>
<path d="M209,318 C213,325 219,331 229,334.5 C219,333 212,327 209,318 Z" fill="#9a9a9a" opacity="0.7"/>
<path d="M209.5,317 C214,323 219,330 229,333" fill="none" stroke="#606060" stroke-width="0.6"/>
<path d="M214,311.5 L220.5,317.5" fill="none" stroke="#707070" stroke-width="0.6"/>
<ellipse cx="217.8" cy="313.8" rx="1.3" ry="2" transform="rotate(-40 217.8 313.8)" fill="#555"/>

<!-- r5 Voice -->
<ellipse cx="301.5" cy="321.4" rx="12.5" ry="10" fill="url(#gWave)" opacity="0.22"/>
<rect x="286.5" y="320.5" width="30" height="2" fill="#111"/>
<rect x="288" y="320.9" width="27" height="1" fill="#f0f0f0"/>
<g fill="url(#gWave)">
 <rect x="290.5" y="310" width="1.4" height="23"/>
 <rect x="293.8" y="311" width="1.4" height="21"/>
 <rect x="295.8" y="306.5" width="1.4" height="30"/>
 <rect x="298.8" y="308" width="1.4" height="27"/>
 <rect x="300.8" y="310" width="1.4" height="23"/>
 <rect x="304.4" y="309" width="1.4" height="26"/>
 <rect x="306.6" y="311" width="1.4" height="21"/>
 <rect x="309.9" y="310" width="1.4" height="23"/>
 <rect x="312.1" y="312" width="1.4" height="19"/>
</g>

<!-- r6 Network client -->
<path d="M212.5,372.5 L212.5,368.4 L223.5,368.4" fill="none" stroke="#dadada" stroke-width="1"/>
<rect x="205.8" y="372.8" width="13.3" height="13.3" fill="#6a9cd0" stroke="#1a1a1a" stroke-width="0.6"/>
<g transform="translate(224,356.7)">
 <rect x="0" y="0" width="11" height="24.5" fill="#ececec" stroke="#8a8a8a" stroke-width="0.6"/>
 <rect x="1.4" y="1.4" width="8.4" height="6.4" fill="#1a1a1a"/>
 <rect x="2.5" y="3.5" width="6" height="2" fill="#555"/>
 <rect x="0.6" y="8.5" width="9.8" height="15.5" fill="#e0e0e0"/>
 <ellipse cx="5.5" cy="12.6" rx="1" ry="0.6" fill="#222"/>
 <circle cx="5.5" cy="18.5" r="4.1" fill="#555"/>
 <circle cx="5.5" cy="18.5" r="2.6" fill="#f2f2f2"/>
</g>

<!-- r6 Wacom -->
<path d="M286.3,363.1 L316.7,363.1 L317.7,383 L316.7,384.7 L286.3,384.7 L285.3,383 Z" fill="url(#gFrame)" stroke="#1a1a1a" stroke-width="0.8"/>
<rect x="289.2" y="365" width="24.9" height="15" fill="#f2f2f2"/>
<path d="M303.5,373.5 L318.5,358.8 L320,362 L306,375.5 Z" fill="#000" opacity="0.18"/>
<path d="M295.8,375.8 L299.6,374.6 L297,371.9 Z" fill="#111"/>
<path d="M299.6,374.6 L297,371.9 L298.55,368.2 L303.45,373.2 Z" fill="#e6dcc0"/>
<path d="M298.55,368.2 L313.55,353.5 Q316.5,352 318.45,358.5 L303.45,373.2 Z" fill="url(#gPencil)"/>

<!-- r7 Network server -->
<g transform="translate(207,409)">
 <rect x="0" y="0" width="11" height="24.5" fill="#ececec" stroke="#8a8a8a" stroke-width="0.6"/>
 <rect x="1.4" y="1.4" width="8.4" height="6.4" fill="#1a1a1a"/>
 <rect x="2.5" y="3.5" width="6" height="2" fill="#555"/>
 <rect x="0.6" y="8.5" width="9.8" height="15.5" fill="#e0e0e0"/>
 <ellipse cx="5.5" cy="12.6" rx="1" ry="0.6" fill="#222"/>
 <circle cx="5.5" cy="18.5" r="4.1" fill="#555"/>
 <circle cx="5.5" cy="18.5" r="2.6" fill="#f2f2f2"/>
</g>
<path d="M219,418.4 L232.5,418.4 M224.4,418.4 L224.4,422 M232.5,418.4 L232.5,422" fill="none" stroke="#dadada" stroke-width="1"/>
<rect x="221.9" y="422.8" width="5.3" height="5.3" fill="#6a9cd0" stroke="#1a1a1a" stroke-width="0.6"/>
<rect x="230" y="422.8" width="5.3" height="5.3" fill="#6a9cd0" stroke="#1a1a1a" stroke-width="0.6"/>

<!-- r8-r10 OptiTrack -->
<g transform="translate(0,0)">
 <path d="M209,454 L216,454 L235,458 L235,485 L209,489 Z" fill="#e02a2a"/>
 <ellipse cx="223" cy="471" rx="7.8" ry="9" fill="none" stroke="#262020" stroke-width="2"/>
</g>
<g transform="translate(0,50)">
 <path d="M209,454 L216,454 L235,458 L235,485 L209,489 Z" fill="#e02a2a"/>
 <ellipse cx="223" cy="471" rx="7.8" ry="9" fill="none" stroke="#262020" stroke-width="2"/>
</g>
<g transform="translate(0,100)">
 <path d="M209,454 L216,454 L235,458 L235,485 L209,489 Z" fill="#e02a2a"/>
 <ellipse cx="223" cy="471" rx="7.8" ry="9" fill="none" stroke="#262020" stroke-width="2"/>
</g>

<!-- r11 script embedded -->
<g transform="translate(-80,550)">
 <path d="M286,69 L300.5,58.5 L302.8,62 L302.8,80.5 L295.5,86.5 L291,82.5 Z" fill="url(#gPaper)"/>
 <line x1="294" y1="83.6" x2="302" y2="79.8" stroke="#d8ceb0" stroke-width="2.4" stroke-linecap="round"/>
 <line x1="288.2" y1="66.2" x2="300.2" y2="57.8" stroke="url(#gRoll)" stroke-width="4.8" stroke-linecap="round"/>
 <ellipse cx="288.4" cy="68.4" rx="2.3" ry="1.6" transform="rotate(-33 288.4 68.4)" fill="#3e3828"/>
 <circle cx="293.6" cy="83.6" r="2.8" fill="url(#gRoll)"/>
 <path d="M305,64.8 h5.3 q2,0 2,2 v4.8 q0,1.6 -1.6,1.6 h-4.6 q-1.8,0 -1.8,1.8 v3 h-2.5 q-2,0 -2,-2.2 v-4.4 q0,-2.2 2,-2.2 h5.6 v-0.8 h-3.9 v-1.6 q0,-2 1.5,-2 z" fill="url(#gPyB)"/>
 <path d="M310.5,83 h-5 q-2,0 -2,-2 v-4.8 q0,-1.6 1.6,-1.6 h4.6 q1.8,0 1.8,-1.8 v-3 h2.6 q2.2,0 2.2,2.2 v4.4 q0,2.2 -2.2,2.2 h-5.6 v0.8 h3.9 v1.6 q0,2 -1.9,2 z" fill="url(#gPyY)"/>
 <circle cx="305.4" cy="67.4" r="0.9" fill="#111"/>
 <circle cx="310.4" cy="80.4" r="0.9" fill="#111"/>
</g>
</svg>

<div class="lbl2" style="left:184px;top:90px;letter-spacing:0.0px">General Purp<span class="dots">...</span></div>
<div class="lbl2" style="left:266px;top:90px;letter-spacing:0.3px">Script (Exter<span class="dots">...</span></div>
<div class="lbl2" style="left:203px;top:140px;letter-spacing:-0.1px">Joystick</div>
<div class="lbl2" style="left:264px;top:140px;letter-spacing:0.3px">Script (Intern<span class="dots">...</span></div>
<div class="lbl2" style="left:197px;top:190px;letter-spacing:0.15px">Keyboard</div>
<div class="lbl2" style="left:287px;top:190px;letter-spacing:-0.25px">Sound</div>
<div class="lbl2" style="left:211px;top:240px;letter-spacing:-0.15px">LTC</div>
<div class="lbl2" style="left:278px;top:240px;letter-spacing:-0.25px">SpaceBall</div>
<div class="lbl2" style="left:208px;top:290px;letter-spacing:0.3px">MIDI</div>
<div class="lbl2" style="left:285px;top:290px;letter-spacing:-0.05px">Trigger</div>
<div class="lbl2" style="left:205px;top:340px;letter-spacing:-0.25px">Mouse</div>
<div class="lbl2" style="left:288px;top:340px;letter-spacing:-0.25px">Voice</div>
<div class="lbl2" style="left:187px;top:390px;letter-spacing:0.2px">Network client</div>
<div class="lbl2" style="left:268px;top:390px;letter-spacing:0.15px">Wacom Tablet</div>
<div class="lbl2" style="left:185px;top:440px;letter-spacing:0.3px">Network ser<span class="dots">...</span></div>
<div class="lbl2" style="left:186px;top:490px;letter-spacing:0.2px">OptiTrack In<span class="dots">...</span></div>
<div class="lbl2" style="left:186px;top:590px;letter-spacing:0.0px">OptiTrack Sk<span class="dots">...</span></div>
<div class="lbl2" style="left:186px;top:640px;letter-spacing:-0.05px">Script (Embe<span class="dots">...</span></div>
<div class="sel" style="left:182px;top:528px;width:80px;height:26px"></div>
<div class="lbl2" style="left:198px;top:528px;letter-spacing:0.2px;color:#f4f4f4">OptiTrack</div>
<div class="lbl2" style="left:205px;top:541px;letter-spacing:0.05px;color:#f4f4f4">Optical</div>
</body></html>
